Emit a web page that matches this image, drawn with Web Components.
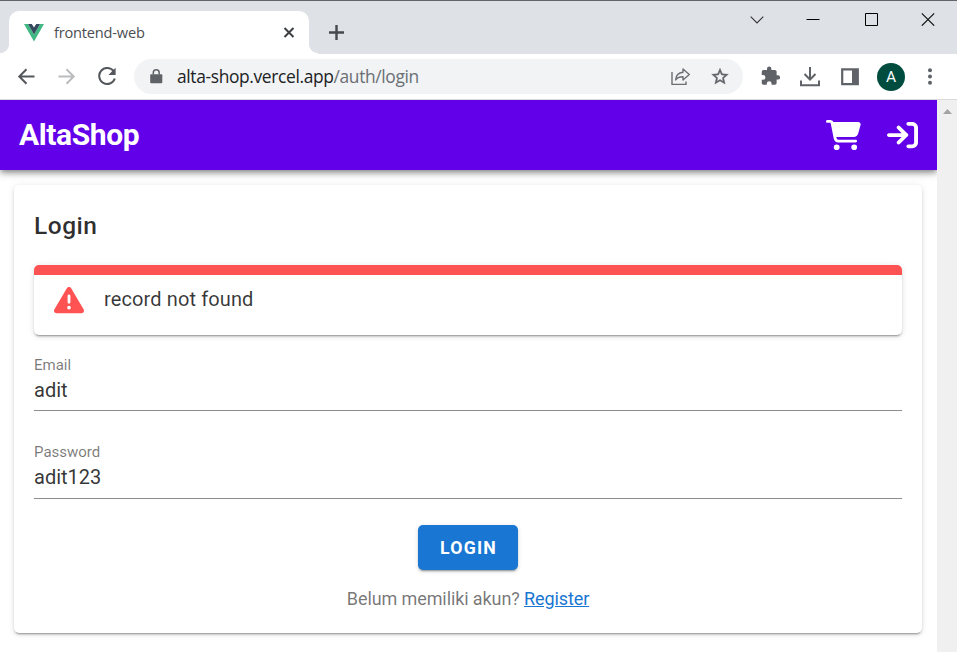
<!DOCTYPE html>
<html lang="id">
<head>
<meta charset="utf-8">
<title>frontend-web</title>
<style>
html,body{margin:0;height:652px;overflow:hidden;background:#fff}
body{font-family:Roboto,sans-serif}
</style>
</head>
<body>
<browser-window>
  <tab-strip slot="tabs">frontend-web</tab-strip>
  <tool-bar slot="toolbar">alta-shop.vercel.app<span slot="path">/auth/login</span></tool-bar>
  <shop-header>AltaShop</shop-header>
  <login-card>
    <alert-box slot="alert">record not found</alert-box>
    <text-field label="Email">adit</text-field>
    <text-field label="Password">adit123</text-field>
    <raised-button slot="action">LOGIN</raised-button>
  </login-card>
</browser-window>
<script>
const define = (name, html) => customElements.define(name, class extends HTMLElement {
  constructor() {
    super();
    const t = document.createElement('template');
    t.innerHTML = html;
    this.attachShadow({mode: 'open'}).append(t.content.cloneNode(true));
  }
  connectedCallback() {
    const l = this.shadowRoot.querySelector('.label');
    if (l) l.textContent = this.getAttribute('label');
  }
});

define('browser-window', `
<style>
:host{display:flex;flex-direction:column;width:957px;height:652px;overflow:hidden}
.view{flex:1;display:flex;min-height:0}
main{width:937px;display:flex;flex-direction:column;overflow:hidden}
aside{width:20px;background:#f0f0f0;box-sizing:border-box;padding:9px 0 0 6px}
aside svg{display:block}
</style>
<slot name="tabs"></slot><slot name="toolbar"></slot>
<div class="view"><main><slot></slot></main>
<aside><svg width="10" height="6"><path d="M0 5 4.500 0 9 5Z" fill="#a3a3a3"/></svg></aside></div>`);

define('tab-strip', `
<style>
:host{display:flex;height:54px;box-sizing:border-box;border-top:1px solid #646567;background:#dee1e6;font-family:"Open Sans",sans-serif}
.cut{width:9px;align-self:flex-end;height:10px;background:radial-gradient(circle at 0 0,transparent 8.6px,#fff 9.4px)}
.cut.r{background:radial-gradient(circle at 100% 0,transparent 8.6px,#fff 9.4px)}
.tab{width:300px;height:43px;margin-top:10px;background:#fff;border-radius:10px 10px 0 0;display:flex;align-items:center;box-sizing:border-box;padding:0 14px 0 15px}
.title{flex:1;margin-left:10px;padding-bottom:2px;font-size:14.6px;letter-spacing:-.2px;color:#4b4e52;line-height:20px}
svg{display:block}
.plus{margin:23px 0 0 10px}
.ctl{margin-left:auto;display:flex;height:36px;align-items:center;padding-right:22px}
.ctl svg+svg{margin-left:44px}
.ctl svg:nth-child(2){margin-left:42px}
.ctl svg:nth-child(4){margin-left:43px}
</style>
<div class="cut"></div>
<div class="tab"><svg width="20" height="18" viewBox="0 0 20 18"><path d="M0 0h4l6 10.5L16 0h4L10 17.5Z" fill="#41b883"/><path d="M4 0h3.8L10 3.6 12.2 0H16l-6 10.5Z" fill="#35495e"/></svg>
<span class="title"><slot></slot></span>
<svg width="13" height="13"><path d="m2.5 2 9 9m0-9-9 9" stroke="#3c4043" stroke-width="2"/></svg></div>
<div class="cut r"></div>
<svg class="plus" width="16" height="16"><path d="M8.5 1v15M1 8.500h15" stroke="#45484c" stroke-width="2.400"/></svg>
<div class="ctl">
<svg width="14" height="14"><path d="m.7 4.7 6.3 6.3 6.3-6.3" fill="none" stroke="#333" stroke-width="1.1"/></svg>
<svg width="14" height="14"><path d="M.5 7.5h13" stroke="#000"/></svg>
<svg width="14" height="14"><path d="M1.5 1.5h12v12h-12Z" fill="none" stroke="#000"/></svg>
<svg width="14" height="14"><path d="m.8 1.3 12.4 12.4m0-12.4L.8 13.7" stroke="#111" stroke-width="1.15"/></svg>
</div>`);

define('tool-bar', `
<style>
:host{display:flex;align-items:center;height:46px;box-sizing:border-box;border-bottom:1px solid #d9d9dc;background:#fff;padding:0 17px 0 16px;font-family:"Open Sans",sans-serif}
svg{display:block;flex:none}
.omni{width:609px;height:35px;border-radius:18px;background:#f1f3f4;display:flex;align-items:center;margin-left:17px;box-sizing:border-box;padding:0 13px 0 16px}
.url{flex:1;margin-left:14px;padding-bottom:1px;font-size:17.4px;line-height:24px;letter-spacing:-.36px;color:#202124;white-space:nowrap}
.path{color:#6b6f74}
.av{width:28px;height:28px;border-radius:50%;background:#004d40;color:#fff;display:flex;align-items:center;justify-content:center;font:400 15.5px/28px Roboto,sans-serif;margin-left:18px}
</style>
<svg width="20" height="20"><path d="M18.5 9.5H4M10.5 2.3 3.3 9.5l7.2 7.2" fill="none" stroke="#54575c" stroke-width="2"/></svg>
<svg style="margin-left:21px" width="20" height="20"><path d="M1.5 9.5H16M9.5 2.3l7.2 7.2-7.2 7.2" fill="none" stroke="#babcbe" stroke-width="2"/></svg>
<svg style="margin-left:20px" width="20" height="20"><path d="M16.8 4.4A8 8 0 1 0 17.8 11.5" fill="none" stroke="#54575c" stroke-width="2"/><path d="M18.6 .7v7.2h-7.2Z" fill="#54575c"/></svg>
<div class="omni">
<svg width="13" height="15" viewBox="0 0 13 15"><path d="M1.2 5.2h10.1q1 0 1 1v7q0 1-1 1H1.2q-1 0-1-1v-7q0-1 1-1Z" fill="#5f6368"/><path d="M3.3 5.5V3.7a2.9 2.9 0 0 1 5.9 0v1.8" fill="none" stroke="#5f6368" stroke-width="1.5"/></svg>
<span class="url"><slot></slot><span class="path"><slot name="path"></slot></span></span>
<svg width="20" height="20" viewBox="0 0 20 20"><path d="M2 5v12.4h14v-3" fill="none" stroke="#6b6f74" stroke-width="1.4"/><path d="M13 2 19.3 7.5 13 13V9.7c-3.4-.1-6 .9-7.4 3.3.3-4.2 3-7.3 7.4-7.7Z" fill="none" stroke="#6b6f74" stroke-width="1.4" stroke-linejoin="round"/></svg>
<svg style="margin-left:20px" width="20" height="20" viewBox="0 .5 24 24" fill="#5f6368"><path d="m22 9.24-7.19-.62L12 2 9.19 8.63 2 9.24l5.46 4.73L5.82 21 12 17.27 18.18 21l-1.63-7.03L22 9.24ZM12 15.4l-3.76 2.27 1-4.28-3.32-2.88 4.38-.38L12 6.1l1.71 4.04 4.38.38-3.32 2.88 1 4.28L12 15.4Z" stroke="#5f6368" stroke-width=".5"/></svg>
</div>
<svg style="margin-left:17px" width="21" height="21" viewBox="0 .5 24 24"><path fill="#5f6368" d="M20.5 11H19V7c0-1.1-.9-2-2-2h-4V3.5a2.5 2.5 0 0 0-5 0V5H4a2 2 0 0 0-2 2v3.8h1.5a2.7 2.7 0 0 1 0 5.4H2V20c0 1.1.9 2 2 2h3.8v-1.5a2.7 2.7 0 0 1 5.4 0V22H17a2 2 0 0 0 2-2v-4h1.5a2.5 2.5 0 0 0 0-5Z"/></svg>
<svg style="margin-left:19px" width="20" height="20"><path d="M10 0v12M4.5 7 10 12.5 15.5 7M1 13.500v4.700h18v-4.700" fill="none" stroke="#5f6368" stroke-width="2"/></svg>
<svg style="margin-left:21px" width="18" height="18"><path d="M1.2 1.4h15.6v14.8H1.2Z" fill="none" stroke="#5f6368" stroke-width="2.2"/><path d="M11 1h6v15h-6Z" fill="#5f6368"/></svg>
<div class="av">A</div>
<svg style="margin-left:auto" width="18" height="20"><g fill="#5f6368"><circle cx="8" cy="3.3" r="2"/><circle cx="8" cy="9.5" r="2"/><circle cx="8" cy="15.7" r="2"/></g></svg>`);

define('shop-header', `
<style>
:host{display:flex;flex:none;align-items:center;height:70px;box-sizing:border-box;padding:0 19px 0 19px;background:#6200ea;color:#fff;
box-shadow:0 2px 5px -1px rgba(0,0,0,.3),0 4px 6px rgba(0,0,0,.2),0 1px 12px rgba(0,0,0,.12)}
b{flex:1;font-size:30px;line-height:40px;font-weight:700;letter-spacing:-.4px}
svg{display:block}
</style>
<b><slot></slot></b>
<svg width="35" height="30" viewBox="0 0 576 512" preserveAspectRatio="none" fill="#fff"><path d="M0 24C0 10.7 10.7 0 24 0H69.5c22 0 41.5 12.8 50.6 32h411c26.3 0 45.5 25 38.6 50.4l-41 152.3c-8.5 31.4-37 53.3-69.5 53.3H170.7l5.4 28.5c2.2 11.3 12.1 19.5 23.6 19.5H488c13.3 0 24 10.7 24 24s-10.7 24-24 24H199.7c-34.6 0-64.3-24.6-70.7-58.5L77.4 54.5c-.7-3.8-4-6.5-7.9-6.5H24C10.7 48 0 37.3 0 24zM128 464a48 48 0 1 1 96 0 48 48 0 1 1-96 0zm336-48a48 48 0 1 1 0 96 48 48 0 1 1 0-96z"/></svg>
<svg style="margin-left:26px" width="31" height="30" viewBox="0 0 512 512" preserveAspectRatio="none" fill="#fff"><path d="M352 96l64 0c17.7 0 32 14.3 32 32l0 256c0 17.7-14.3 32-32 32l-64 0c-17.7 0-32 14.3-32 32s14.3 32 32 32l64 0c53 0 96-43 96-96l0-256c0-53-43-96-96-96l-64 0c-17.7 0-32 14.3-32 32s14.3 32 32 32zm-9.4 182.6c12.5-12.5 12.5-32.8 0-45.3l-128-128c-12.5-12.5-32.8-12.5-45.3 0s-12.5 32.8 0 45.3L242.7 224 32 224c-17.7 0-32 14.3-32 32s14.3 32 32 32l210.7 0-73.4 73.4c-12.5 12.5-12.5 32.8 0 45.3s32.8 12.5 45.3 0l128-128z"/></svg>`);

define('login-card', `
<style>
:host{display:flex;flex:none;flex-direction:column;height:448px;box-sizing:border-box;margin:15px 15px 0 14px;padding:21px 20px 20px;border-radius:5px;background:#fff;
box-shadow:0 3px 1px -2px rgba(0,0,0,.2),0 2px 2px rgba(0,0,0,.14),0 1px 6px rgba(0,0,0,.12)}
h1{margin:0 0 19px;font-size:24.5px;line-height:40px;font-weight:500;letter-spacing:.5px;color:rgba(0,0,0,.82)}
.action{align-self:center;margin-top:26px}
p{margin:14px 0 0;text-align:center;font-size:18px;line-height:30px;color:rgba(0,0,0,.55);letter-spacing:-.1px}
a{color:#1976d2;text-decoration:underline}
</style>
<h1>Login</h1><slot name="alert"></slot><slot></slot>
<div class="action"><slot name="action"></slot></div>
<p>Belum memiliki akun? <a>Register</a></p>`);

define('alert-box', `
<style>
:host{display:flex;height:70px;flex:none;box-sizing:border-box;border-top:10px solid #ff5252;border-radius:5px;padding:10px 20px;gap:20px;font-size:20px;line-height:28px;letter-spacing:.12px;color:rgba(0,0,0,.78);
box-shadow:0 3px 1px -2px rgba(0,0,0,.2),0 2px 2px rgba(0,0,0,.14),0 1px 6px rgba(0,0,0,.12);margin-bottom:20px}
svg{display:block}
</style>
<svg width="30" height="30" viewBox="0 0 512 512" fill="#ff5252"><path d="M256 32c14.2 0 27.3 7.5 34.5 19.8l216 368c7.3 12.4 7.3 27.7 .2 40.1S486.3 480 472 480H40c-14.3 0-27.6-7.7-34.7-20.1s-7-27.8 .2-40.1l216-368C228.7 39.5 241.8 32 256 32zm0 128c-13.3 0-24 10.7-24 24V296c0 13.3 10.7 24 24 24s24-10.7 24-24V184c0-13.3-10.7-24-24-24zm32 224a32 32 0 1 0 -64 0 32 32 0 1 0 64 0z"/></svg>
<span><slot></slot></span>`);

define('text-field', `
<style>
:host{display:flex;flex-direction:column;flex:none;height:56px;box-sizing:border-box;border-bottom:1px solid #8c8c8c}
:host([label=Password]){margin-top:31px;height:57px}
.label{font-size:15px;line-height:20px;color:rgba(0,0,0,.53)}
.value{font-size:20px;line-height:30px;color:rgba(0,0,0,.8)}
</style>
<span class="label"></span><span class="value"><slot></slot></span>`);

define('raised-button', `
<style>
:host{display:flex;align-items:center;justify-content:center;width:100px;height:45px;box-sizing:border-box;padding-left:1px;border-radius:5px;background:#1976d2;color:#fff;font-weight:700;font-size:17.7px;letter-spacing:1.2px;
box-shadow:0 3px 1px -2px rgba(0,0,0,.2),0 2px 2px rgba(0,0,0,.14),0 1px 5px rgba(0,0,0,.12)}
</style>
<slot></slot>`);
</script>
</body>
</html>
